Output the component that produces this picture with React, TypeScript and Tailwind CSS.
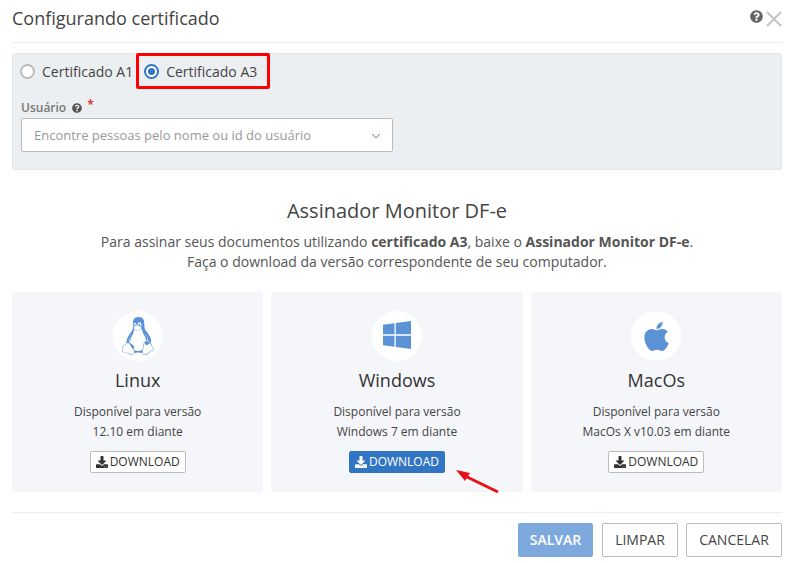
import React from 'react';
import { FaApple, FaDownload, FaLinux, FaQuestionCircle, FaWindows } from 'react-icons/fa';
import { ChevronDown } from 'lucide-react';

type Platform = {
  name: string;
  version: string;
  icon: React.ReactNode;
  primary?: boolean;
};

const platforms: Platform[] = [
  { name: 'Linux', version: '12.10 em diante', icon: <FaLinux size={38} /> },
  { name: 'Windows', version: 'Windows 7 em diante', icon: <FaWindows size={32} className="-translate-y-px" />, primary: true },
  { name: 'MacOs', version: 'MacOs X v10.03 em diante', icon: <FaApple size={33} /> },
];

const PlatformCard: React.FC<{ platform: Platform }> = ({ platform }) => (
  <div className="flex h-[200px] flex-1 flex-col items-center rounded-[3px] bg-[#f4f6fa] pt-[19px]">
    <div className="flex h-[50px] w-[50px] items-center justify-center rounded-full bg-white text-[#5b92d6]">
      {platform.icon}
    </div>
    <h3 className="mt-[7px] text-[18px] leading-[24px] text-[#333]">{platform.name}</h3>
    <p className="mt-[10px] text-[12px] leading-[20px] text-[#444]">Disponível para versão</p>
    <p className="text-[12px] leading-[20px] text-[#444]">{platform.version}</p>
    <button
      className={
        platform.primary
          ? 'mt-[9px] flex h-[22px] items-center gap-[2px] rounded-[2px] border border-[#3276c3] bg-[#3276c3] px-[5px] text-[12px] text-white'
          : 'mt-[9px] flex h-[22px] items-center gap-[2px] rounded-[2px] border border-[#bbb] bg-white px-[5px] text-[12px] text-[#333]'
      }
    >
      <FaDownload size={12} />
      DOWNLOAD
    </button>
  </div>
);

export default function App() {
  return (
    <div className="relative h-[563px] w-[791px] overflow-hidden bg-white pl-3 pr-[9px] font-['Open_Sans',sans-serif] text-[#444]">
      {/* Header */}
      <div className="flex h-[43px] items-center justify-between border-b border-[#eee] pb-[5px]">
        <h2 className="text-[18px] text-[#444]">Configurando certificado</h2>
        <div className="flex items-center gap-[3px]">
          <FaQuestionCircle size={13} className="mb-[5px] text-[#666]" />
          <svg width="16" height="16" viewBox="0 0 16 16" fill="none" stroke="#c4c4c4" strokeWidth="2">
            <path d="M1 1 L15 15 M15 1 L1 15" />
          </svg>
        </div>
      </div>

      {/* Certificate form */}
      <div className="mt-[10px] h-[117px] rounded-[3px] border border-[#e3e6e8] bg-[#eceff1] px-2">
        <div className="-ml-px flex h-[35px] items-center text-[14px]">
          <label className="flex items-center gap-[7px]">
            <span className="h-[15px] w-[15px] rounded-full border-2 border-[#bbb] bg-white" />
            Certificado A1
          </label>
          <label className="ml-[11px] flex items-center gap-[7px]">
            <span className="flex h-[15px] w-[15px] items-center justify-center rounded-full border-2 border-[#3276c3] bg-white">
              <span className="h-[7px] w-[7px] rounded-full bg-[#3276c3]" />
            </span>
            Certificado A3
          </label>
        </div>
        <div className="mt-[9px] flex h-[20px] items-center text-[12px] font-semibold text-[#777]">
          Usuário
          <FaQuestionCircle size={10} className="ml-[6px] text-[#555]" />
          <span className="mb-[6px] ml-[5px] text-[#d22]">*</span>
        </div>
        <div className="flex h-[34px] w-[372px] items-center justify-between rounded-[2px] border border-[#bbb] bg-white pl-3 pr-[9px] pt-px text-[13px] text-[#999]">
          Encontre pessoas pelo nome ou id do usuário
          <ChevronDown size={14} strokeWidth={1.5} className="text-[#555]" />
        </div>
      </div>

      {/* Intro */}
      <div className="mt-[27px] text-center">
        <h3 className="text-[20px] leading-[28px] text-[#444]">Assinador Monitor DF-e</h3>
        <p className="mt-[7px] text-[14px] leading-[20px] text-[#555]">
          Para assinar seus documentos utilizando <b>certificado A3</b>, baixe o <b>Assinador Monitor DF-e</b>.
        </p>
        <p className="text-[14px] leading-[20px] text-[#555]">Faça o download da versão correspondente de seu computador.</p>
      </div>

      {/* Platform cards */}
      <div className="mt-[20px] flex gap-2">
        {platforms.map((platform) => (
          <PlatformCard key={platform.name} platform={platform} />
        ))}
      </div>

      {/* Footer */}
      <div className="mt-[20px] flex justify-end border-t border-[#eee] pt-[10px] text-[14px]">
        <button className="h-[34px] w-[75px] rounded-[2px] bg-[#7ea9dc] pb-[2px] font-semibold text-white">SALVAR</button>
        <button className="ml-[9px] h-[34px] w-[76px] rounded-[2px] border border-[#bbb] pb-[2px] text-[#444]">LIMPAR</button>
        <button className="ml-2 h-[34px] w-[96px] rounded-[2px] border border-[#bbb] pb-[2px] text-[#444]">CANCELAR</button>
      </div>

      {/* Annotations */}
      <div className="absolute left-[136px] top-[53px] h-[36px] w-[134px] rounded-[2px] border-[3px] border-[#f00]" />
      <svg className="absolute left-[455px] top-[468px]" width="46" height="28" viewBox="0 0 46 28">
        <path d="M43 24 L10 8" stroke="#e8101a" strokeWidth="3" />
        <path d="M1 2 L15 5 L10 13 Z" fill="#e8101a" />
      </svg>
    </div>
  );
}
